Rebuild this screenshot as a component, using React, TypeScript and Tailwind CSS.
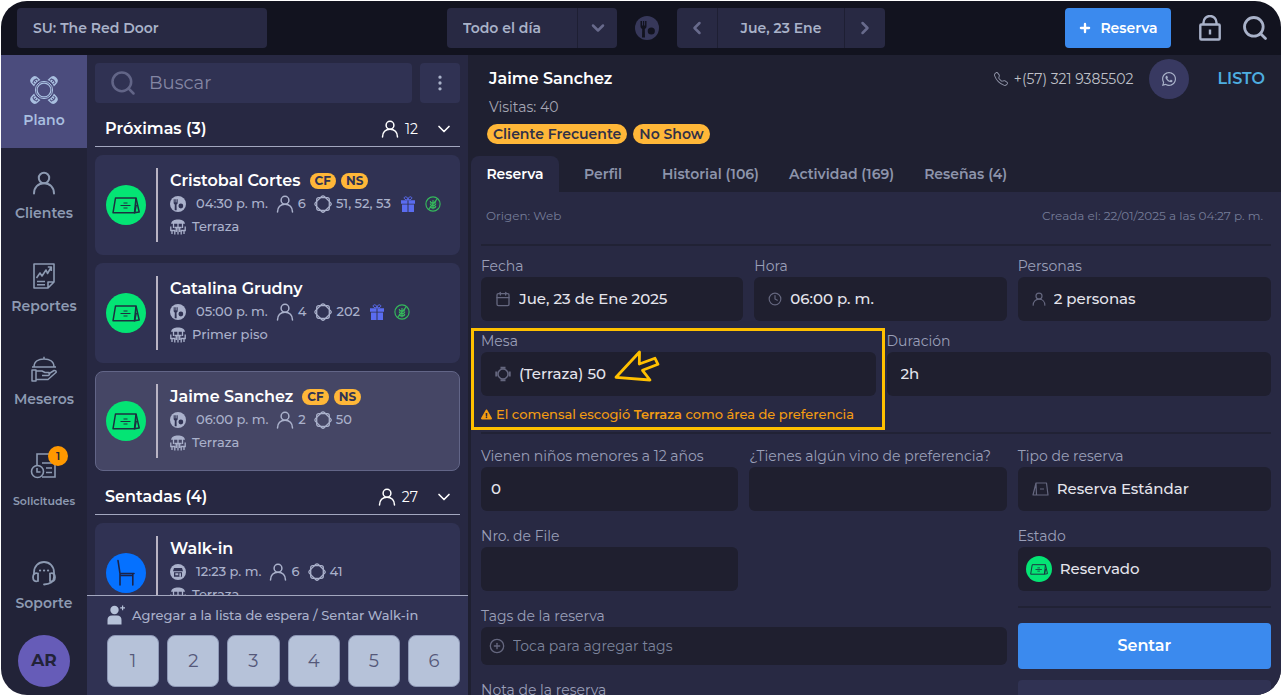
import type { ReactNode } from "react"
import clsx from "clsx"
import { Calendar, ChevronDown, ChevronLeft, ChevronRight, CirclePlus, Clock, EllipsisVertical, Plus, Search } from "lucide-react"
import { BsTelephone } from "react-icons/bs"
import { FaExclamationTriangle, FaWhatsapp } from "react-icons/fa"

type IconProps = { className?: string }

function UserIcon({ className }: IconProps) {
  return (
    <svg viewBox="0 0 24 24" fill="none" stroke="currentColor" strokeWidth="2" strokeLinecap="round" className={className}>
      <circle cx="12" cy="7" r="5.2" />
      <path d="M2 22.5c0-6 4-10.3 10-10.3s10 4.3 10 10.3" />
    </svg>
  )
}

function FloorIcon({ className }: IconProps) {
  return (
    <svg viewBox="0 0 28 28" fill="none" stroke="currentColor" className={className}>
      {[45, 135, 225, 315].map((angle) => (
        <g key={angle} transform={`rotate(${angle} 14 14)`}>
          <path d="M9.500 4.500V1.500Q9.500-3.500 14-3.500T18.500 1.500V4.500Q14 2.500 9.500 4.500z" fill="currentColor" stroke="none" />
          <path d="M11.500 3V.8q2.500-1.500 5 0V3M14 .5v2" stroke="#4b4c7d" strokeWidth="1" />
        </g>
      ))}
      <circle cx="14" cy="14" r="8.600" strokeWidth="1" />
      <circle cx="14" cy="14" r="6.900" strokeWidth="1.200" />
    </svg>
  )
}

function TableIcon({ className }: IconProps) {
  return (
    <svg viewBox="0 0 18 18" fill="none" stroke="currentColor" strokeWidth="1.300" className={className}>
      <rect x="2.700" y="2.700" width="12.600" height="12.600" rx="2" />
      <rect x="2.700" y="2.700" width="12.600" height="12.600" rx="2" transform="rotate(45 9 9)" />
    </svg>
  )
}

function RoundTableIcon({ className }: IconProps) {
  return (
    <svg viewBox="0 0 16 16" fill="none" stroke="currentColor" strokeWidth="1.500" className={className}>
      <circle cx="8" cy="8" r="5" />
      <path d="M5.500 1.800h5M5.500 14.200h5M1.300 5.500v5M14.700 5.500v5" strokeWidth="2" />
    </svg>
  )
}

function PlateIcon({ className, hole = "#303253" }: IconProps & { hole?: string }) {
  return (
    <svg viewBox="0 0 24 24" className={className}>
      <circle cx="12" cy="12" r="12" fill="currentColor" />
      <path d="M5.500 5v5.500q0 2 1.700 2.400l-.2 8.600h3l-.2-8.600q1.700-.4 1.700-2.400V5" fill={hole} />
      <path d="M7.500 4.500v5M9.600 4.500v5" stroke="currentColor" strokeWidth=".9" />
      <circle cx="16.300" cy="15" r="3.600" fill={hole} />
    </svg>
  )
}

function StoreIcon({ className }: IconProps) {
  return (
    <svg viewBox="0 0 24 24" className={className}>
      <circle cx="12" cy="12" r="12" fill="currentColor" />
      <path d="M6 6h12l1.500 5h-15zM6 12.500h12V19H6z" fill="#303253" />
      <path d="M8 14h4.500v2.800H8zM14 14h2.500v5H14z" fill="currentColor" />
    </svg>
  )
}

function TerraceIcon({ className }: IconProps) {
  return (
    <svg viewBox="0 0 16 16" fill="none" stroke="currentColor" strokeWidth="1.300" className={className}>
      <path d="M1 4.800C1.500 1.500 4.500.4 8 .4s6.500 1.100 7 4.400z" fill="currentColor" stroke="none" />
      <path d="M8 4v11.500M3.500 4v5M12.500 4v5M4.500 8.500h7M.8 7.500v4h4v4M15.200 7.500v4h-4v4M2 11.500V15M14 11.500V15M6.300 9v4M9.700 9v4" />
    </svg>
  )
}

function GiftIcon({ className }: IconProps) {
  return (
    <svg viewBox="0 0 14 16" fill="currentColor" className={className}>
      <path d="M0 4.200h6.500v3.600H0zM7.500 4.200H14v3.600H7.500zM1 8.600h5.500V16H1zM7.500 8.600H13V16H7.500z" />
      <path d="M6.800 4C2.500 4 2.500.8 4.500.8S6.800 2.500 6.800 4zM7.200 4c4.300 0 4.300-3.200 2.300-3.200S7.200 2.500 7.200 4z" fill="none" stroke="currentColor" />
    </svg>
  )
}

function GlutenFreeIcon({ className }: IconProps) {
  return (
    <svg viewBox="0 0 18 18" fill="none" stroke="currentColor" strokeWidth="1.300" className={className}>
      <circle cx="9" cy="9" r="8" />
      <path d="M9 4.500V15M9 8Q6 8 6 5.500M9 11Q6 11 6 8.500M9 13.500Q6 13.500 6 11.200M9 8q3 0 3-2.500M9 11q3 0 3-2.500M9 13.500q3 0 3-2.300M13.500 3.500l-9 11" />
    </svg>
  )
}

function SignIcon({ className }: IconProps) {
  return (
    <svg viewBox="0 0 28 17" fill="none" stroke="currentColor" strokeWidth="1.500" strokeLinejoin="round" className={className}>
      <path d="M3.500 1h20.500l-1.500 14.800H1z" />
      <path d="M24 1l3.200 14-4.700.8 1.800-8" />
      <path d="M8.500 8.500h10M11.500 6h4M11.500 11h4" strokeWidth="1.200" />
    </svg>
  )
}

function SmallSignIcon({ className }: IconProps) {
  return (
    <svg viewBox="0 0 17 14" fill="none" stroke="currentColor" strokeWidth="1.200" strokeLinejoin="round" className={className}>
      <path d="M4 1h10.500l1.500 12H4.500L4 1 1 13h3.500M8 7h4" />
    </svg>
  )
}

function ChairIcon({ className }: IconProps) {
  return (
    <svg viewBox="0 0 20 28" fill="none" stroke="currentColor" strokeWidth="1.600" strokeLinecap="round" className={className}>
      <path d="M2 1.500L4 14.500h14M4 15v11M16.800 15v11M4.500 16.500h12" />
    </svg>
  )
}

function ReportIcon({ className }: IconProps) {
  return (
    <svg viewBox="0 0 24 28" fill="none" stroke="currentColor" strokeWidth="1.600" strokeLinejoin="round" className={className}>
      <path d="M2 2h20v18l-6 6H2zM22 20h-6v6M5 19.500h8M5 22.700h8M4.500 16l3.500-5 2 3 4-6 1.500 3.500L19 5.500M19.300 9V5h-3.500" />
    </svg>
  )
}

function WaiterIcon({ className }: IconProps) {
  return (
    <svg viewBox="0 0 28 28" fill="none" stroke="currentColor" strokeWidth="1.500" strokeLinejoin="round" className={className}>
      <path d="M4 12C4 6.500 8.500 4 14 4s10 2.500 10 8zM14 4V1.800M2 12h24" />
      <path d="M2 15h4v11H2zM6 16h6l3 1.500h4q1.500 2-.8 3H12M18.500 19l5.500-3.500q2.500-.2 2.200 1.800L18 24.500H6" />
    </svg>
  )
}

function RequestIcon({ className }: IconProps) {
  return (
    <svg viewBox="0 0 28 28" fill="none" stroke="currentColor" strokeWidth="1.600" className={className}>
      <path d="M7 13V2h18v23H12M12 11h10M16 16h6M16 20.500h6" />
      <circle cx="7.500" cy="19.500" r="6" />
      <path d="M7 16v4h3.500" />
    </svg>
  )
}

function SupportIcon({ className }: IconProps) {
  return (
    <svg viewBox="0 0 28 28" fill="none" stroke="currentColor" strokeWidth="1.800" strokeLinecap="round" className={className}>
      <path d="M4 15v-1.500C4 7 8.500 3 14 3s10 4 10 10.500V18c0 5-3.500 7-10 7.500" />
      <path d="M8 14.500v7.500c-3 1-5-.5-5-3.700s2-4.800 5-3.800zM20 14.500v7.500c3 1 5-.5 5-3.700s-2-4.800-5-3.800z" />
      <path d="M10 11.500h.1M14 11.500h.1M18 11.500h.1" strokeWidth="2.200" />
    </svg>
  )
}

function LockIcon({ className }: IconProps) {
  return (
    <svg viewBox="0 0 22 26" fill="none" stroke="currentColor" strokeWidth="2.400" strokeLinejoin="round" className={className}>
      <rect x="1.300" y="9.500" width="19.400" height="15" rx="1" />
      <path d="M4.500 9.500V7.500a6.500 6.500 0 0 1 13 0v2M11 14.500v5" />
    </svg>
  )
}

function AddPersonIcon({ className }: IconProps) {
  return (
    <svg viewBox="0 0 18 20" fill="currentColor" className={className}>
      <circle cx="7.500" cy="5" r="4.200" />
      <path d="M.5 19.500V15q0-4.500 4.500-4.500h5q4.500 0 4.500 4.500v4.500zM15 .5h1.200v1.800H18v1.200h-1.800v1.800H15V3.500h-1.800V2.300H15z" />
    </svg>
  )
}

const navItems = [
  { label: "Plano", Icon: FloorIcon, active: true },
  { label: "Clientes", Icon: UserIcon },
  { label: "Reportes", Icon: ReportIcon },
  { label: "Meseros", Icon: WaiterIcon },
  { label: "Solicitudes", Icon: RequestIcon, badge: 1 },
  { label: "Soporte", Icon: SupportIcon },
]

type Booking = {
  name: string
  time: string
  people: number
  tables: string
  area: string
  tags?: string[]
  extras?: boolean
  selected?: boolean
  walkIn?: boolean
}

const upcoming: Booking[] = [
  { name: "Cristobal Cortes", time: "04:30 p. m.", people: 6, tables: "51, 52, 53", area: "Terraza", tags: ["CF", "NS"], extras: true },
  { name: "Catalina Grudny", time: "05:00 p. m.", people: 4, tables: "202", area: "Primer piso", extras: true },
  { name: "Jaime Sanchez", time: "06:00 p. m.", people: 2, tables: "50", area: "Terraza", tags: ["CF", "NS"], selected: true },
]

const seated: Booking[] = [
  { name: "Walk-in", time: "12:23 p. m.", people: 6, tables: "41", area: "Terraza", walkIn: true },
]

const tabs = ["Reserva", "Perfil", "Historial (106)", "Actividad (169)", "Reseñas (4)"]

function TopBar() {
  return (
    <header className="flex h-[54px] shrink-0 items-center justify-between bg-[#12131f] pr-3 pl-4 text-sm font-semibold text-[#a9b2c9]">
      <button className="h-10 w-[250px] rounded bg-[#282943] px-4 text-left">SU: The Red Door</button>
      <div className="flex items-center gap-[18px]">
        <div className="relative">
          <select aria-label="Turno" className="h-10 w-[170px] appearance-none rounded bg-[#282943] px-4">
            <option>Todo el día</option>
          </select>
          <span className="pointer-events-none absolute inset-y-0 right-0 flex w-10 items-center justify-center border-l border-[#1e1f33]">
            <ChevronDown className="size-5 text-[#686a8c]" strokeWidth={3} />
          </span>
        </div>
        <button aria-label="Servicio">
          <PlateIcon className="size-6 text-[#37385a]" hole="#12131f" />
        </button>
        <div className="flex h-10 overflow-hidden rounded bg-[#282943]">
          <button aria-label="Día anterior" className="flex w-10 items-center justify-center">
            <ChevronLeft className="size-5 text-[#686a8c]" strokeWidth={3} />
          </button>
          <button className="w-32 border-x border-[#1e1f33]">Jue, 23 Ene</button>
          <button aria-label="Día siguiente" className="flex w-10 items-center justify-center">
            <ChevronRight className="size-5 text-[#686a8c]" strokeWidth={3} />
          </button>
        </div>
      </div>
      <div className="flex items-center">
        <button className="flex h-10 w-[106px] items-center justify-center gap-2 rounded bg-[#3b8aee] text-white">
          <Plus className="size-3.5" strokeWidth={4} />
          Reserva
        </button>
        <button aria-label="Bloquear" className="ml-7">
          <LockIcon className="h-[26px] w-[22px]" />
        </button>
        <button aria-label="Buscar" className="ml-5">
          <Search className="size-7" strokeWidth={2.4} />
        </button>
      </div>
    </header>
  )
}

function SideNav() {
  return (
    <nav className="flex w-[86px] shrink-0 flex-col items-center bg-[#222338] text-[#8d9ab2]">
      {navItems.map(({ label, Icon, active, badge }) => (
        <button
          key={label}
          className={clsx(
            "flex w-full shrink-0 flex-col items-center font-semibold",
            badge ? "h-[111px] gap-[11px] pt-[25px] text-[11px]" : "h-[93px] gap-1.5 pt-[21px] text-sm",
            active && "bg-[#4b4c7d] text-[#a9bfe0]"
          )}
        >
          <span className="relative">
            <Icon className={label === "Clientes" ? "my-0.5 size-6" : "size-7"} />
            {badge && (
              <span className="absolute -top-1.5 -right-2.5 flex size-5 items-center justify-center rounded-full bg-[#ff9800] text-[11px] text-[#222338]">
                {badge}
              </span>
            )}
          </span>
          <span className="leading-5">{label}</span>
        </button>
      ))}
      <button className="mt-1 size-[52px] shrink-0 rounded-full bg-[#665cb8] text-[17px] font-bold text-[#222338]">AR</button>
    </nav>
  )
}

function SectionHeader({ title, count }: { title: string; count: number }) {
  return (
    <div className="flex h-11 shrink-0 items-center border-b border-[#a3a7bf] pt-2 pr-1.5 pl-2.5 text-white">
      <h2 className="flex-1 text-base font-semibold">{title}</h2>
      <UserIcon className="size-[18px]" />
      <span className="ml-1.5 text-sm">{count}</span>
      <button aria-label={`Contraer ${title}`} className="ml-4">
        <ChevronDown className="size-5" strokeWidth={2} />
      </button>
    </div>
  )
}

function BookingCard({ booking }: { booking: Booking }) {
  return (
    <article
      className={clsx(
        "flex h-[100px] shrink-0 items-center rounded-lg border pl-2.5",
        booking.selected ? "border-[#626587] bg-[#454665]" : "border-transparent bg-[#303253]"
      )}
    >
      <span
        className={clsx(
          "flex size-10 shrink-0 items-center justify-center rounded-full text-[#1c3040]",
          booking.walkIn ? "bg-[#0571ff]" : "bg-[#04e474]"
        )}
      >
        {booking.walkIn ? <ChairIcon className="h-7 w-5 text-[#1b2348]" /> : <SignIcon className="h-[17px] w-7" />}
      </span>
      <div className="ml-2.5 h-[74px] border-l-2 border-[#b9b4c4] pl-3 text-[13px] font-medium whitespace-nowrap text-[#aab1cb]">
        <div className="flex h-[26px] items-center gap-[5px]">
          <h3 className="mr-1 text-base font-semibold text-white">{booking.name}</h3>
          {booking.tags?.map((tag) => (
            <span key={tag} className="rounded-full bg-[#ffb738] px-[5px] text-xs leading-4 font-bold text-[#303253]">
              {tag}
            </span>
          ))}
        </div>
        <div className="flex h-5 items-center">
          {booking.walkIn ? <StoreIcon className="size-4" /> : <PlateIcon className="size-4" />}
          <span className="ml-2.5">{booking.time}</span>
          <UserIcon className="ml-2 size-[18px]" />
          <span className="ml-1">{booking.people}</span>
          <TableIcon className="ml-2 size-[18px]" />
          <span className="ml-1">{booking.tables}</span>
          {booking.extras && (
            <>
              <GiftIcon className="ml-2.5 h-4 w-3.5 text-[#5a6cf0]" />
              <GlutenFreeIcon className="ml-2.5 size-4 text-[#35b85c]" />
            </>
          )}
        </div>
        <div className="flex h-[26px] items-center gap-1.5">
          <TerraceIcon className="size-4" />
          {booking.area}
        </div>
      </div>
    </article>
  )
}

function BookingList() {
  return (
    <section className="flex w-[381px] shrink-0 flex-col bg-[#272842]">
      <div className="flex min-h-0 flex-1 flex-col gap-2 overflow-hidden px-2 pt-2">
        <div>
          <div className="flex gap-2">
            <label className="flex h-10 min-w-0 flex-1 items-center gap-3 rounded bg-[#303253] px-3.5">
              <Search className="size-7 shrink-0 text-[#626587]" strokeWidth={2.2} />
              <input
                aria-label="Buscar"
                placeholder="Buscar"
                className="min-w-0 flex-1 bg-transparent text-lg outline-none placeholder:text-[#8486a3]"
              />
            </label>
            <button aria-label="Más opciones" className="flex size-10 items-center justify-center rounded bg-[#303253] text-[#a9b2c9]">
              <EllipsisVertical className="size-5" />
            </button>
          </div>
          <SectionHeader title="Próximas (3)" count={12} />
        </div>
        {upcoming.map((booking) => (
          <BookingCard key={booking.name} booking={booking} />
        ))}
        <div className="-mt-2">
          <SectionHeader title="Sentadas (4)" count={27} />
        </div>
        {seated.map((booking) => (
          <BookingCard key={booking.name} booking={booking} />
        ))}
      </div>
      <footer className="shrink-0 border-t border-[#a3a7bf] bg-[#303253] pt-[7px] pr-2 pb-2 pl-5">
        <p className="flex items-center gap-[7px] text-[13px] leading-6 font-medium text-[#aab1cb]">
          <AddPersonIcon className="h-5 w-[18px] text-[#b6c2d9]" />
          Agregar a la lista de espera / Sentar Walk-in
        </p>
        <div className="mt-2 grid grid-cols-6 gap-2">
          {[1, 2, 3, 4, 5, 6].map((n) => (
            <button key={n} className="h-[52px] rounded-lg border border-[#8d97b5] bg-[#b6c2d9] text-lg text-[#555879]">
              {n}
            </button>
          ))}
        </div>
      </footer>
    </section>
  )
}

type FieldProps = {
  id: string
  label: string
  value?: string
  placeholder?: string
  icon?: ReactNode
  select?: boolean
  size?: string
}

function Field({ id, label, value, placeholder, icon, select, size = "h-11 pl-3.5 text-[15px]" }: FieldProps) {
  const control =
    "min-w-0 flex-1 appearance-none self-stretch bg-transparent font-medium text-[#e4e4ec] outline-none placeholder:font-normal placeholder:text-[#7c849c]"
  return (
    <div className="min-w-0">
      <label htmlFor={id} className="mb-px block text-sm leading-5 whitespace-nowrap text-[#9a9fb8]">
        {label}
      </label>
      <div className={clsx("flex items-center gap-2 rounded-md bg-[#1f1f2f] text-[#65677f]", size)}>
        {icon}
        {select ? (
          <select id={id} className={control}>
            <option>{value}</option>
          </select>
        ) : (
          <input id={id} defaultValue={value} placeholder={placeholder} className={control} />
        )}
      </div>
    </div>
  )
}

function Divider() {
  return <hr className="border-t-2 border-[#212235]" />
}

function ReservationForm() {
  return (
    <div className="min-h-0 flex-1 overflow-hidden bg-[#282943] px-2.5">
      <div className="flex h-[52px] items-center justify-between pr-2 pb-1 pl-[5px] text-xs text-[#757c98]">
        <span>Origen: Web</span>
        <span>Creada el: 22/01/2025 a las 04:27 p. m.</span>
      </div>
      <Divider />

      <div className="mt-2.5 grid grid-cols-[262fr_252fr_253fr] gap-[11px]">
        <Field id="fecha" label="Fecha" value="Jue, 23 de Ene 2025" icon={<Calendar className="size-4" />} />
        <Field id="hora" label="Hora" value="06:00 p. m." icon={<Clock className="size-3.5" />} />
        <Field id="personas" label="Personas" value="2 personas" icon={<UserIcon className="size-3.5" />} />
      </div>

      <div className="mt-2.5 mb-2 grid grid-cols-[394fr_384fr] gap-[11px]">
        <div className="relative min-w-0">
          <Field id="mesa" label="Mesa" value="(Terraza) 50" icon={<RoundTableIcon className="size-4" />} />
          <p className="mt-2 flex items-center gap-1 text-[13px] leading-5 font-medium whitespace-nowrap text-[#f39c12]">
            <FaExclamationTriangle className="size-[11px]" />
            <span>
              El comensal escogió <b className="font-semibold">Terraza</b> como área de preferencia
            </span>
          </p>
          <div className="pointer-events-none absolute -top-[3px] -right-[9px] -bottom-1.5 -left-2.5 border-3 border-[#ffc000]" />
          <svg
            viewBox="0 0 46 34"
            fill="none"
            stroke="#ffc000"
            strokeWidth="2.800"
            strokeLinejoin="round"
            className="pointer-events-none absolute top-[18px] left-[133px] h-[34px] w-[46px]"
          >
            <path d="M2 28.300L25.500 3l-.2 12L41 9.300l3 6-15.500 6 7.500 9.700z" />
          </svg>
        </div>
        <Field id="duracion" label="Duración" value="2h" />
      </div>
      <Divider />

      <div className="mt-3 grid grid-cols-[525fr_253fr] gap-[11px]">
        <div className="flex flex-col gap-[15px]">
          <div className="grid grid-cols-2 gap-x-[11px] gap-y-[15px]">
            <Field id="ninos" label="Vienen niños menores a 12 años" value="0" size="h-11 pl-2.5 text-[15px]" />
            <Field id="vino" label="¿Tienes algún vino de preferencia?" size="h-11 pl-2.5 text-[15px]" />
            <Field id="file" label="Nro. de File" size="h-11 pl-2.5 text-[15px]" />
          </div>
          <Field
            id="tags"
            label="Tags de la reserva"
            placeholder="Toca para agregar tags"
            icon={<CirclePlus className="size-4" />}
            size="h-[38px] pl-2 text-sm"
          />
          <Field id="nota" label="Nota de la reserva" />
        </div>
        <div className="flex flex-col gap-[15px]">
          <Field id="tipo" label="Tipo de reserva" value="Reserva Estándar" select icon={<SmallSignIcon className="h-3.5 w-[17px]" />} />
          <Field
            id="estado"
            label="Estado"
            value="Reservado"
            select
            size="h-11 pl-2 text-[15px]"
            icon={
              <span className="flex size-[26px] items-center justify-center rounded-full bg-[#04e474] text-[#1c3040]">
                <SignIcon className="h-[11px] w-[18px]" />
              </span>
            }
          />
          <Divider />
          <div className="flex flex-col gap-[11px]">
            <button className="h-[46px] rounded bg-[#3b8aee] text-base font-semibold text-white">Sentar</button>
            <button aria-label="Más acciones" className="h-[46px] rounded bg-[#303253]" />
          </div>
        </div>
      </div>
    </div>
  )
}

function BookingDetail() {
  return (
    <main className="flex min-w-0 flex-1 flex-col bg-[#1f2031] pl-[3px]">
      <div className="flex items-start justify-between pt-1 pr-4 pl-4">
        <div>
          <h1 className="pl-0.5 text-base leading-10 font-semibold text-white">Jaime Sanchez</h1>
          <p className="pl-0.5 text-sm leading-4 text-[#a5a6b4]">Visitas: 40</p>
          <div className="mt-[9px] flex gap-1.5">
            {["Cliente Frecuente", "No Show"].map((tag) => (
              <span key={tag} className="rounded-full bg-[#ffb738] px-1.5 text-sm leading-5 font-semibold text-[#303048]">
                {tag}
              </span>
            ))}
          </div>
        </div>
        <div className="flex items-center">
          <a href="tel:+573219385502" className="flex items-center gap-1.5 text-sm text-[#bfc0c8]">
            <BsTelephone className="size-3.5 text-[#8d91a5]" />
            +(57) 321 9385502
          </a>
          <button aria-label="WhatsApp" className="ml-4 flex size-10 items-center justify-center rounded-full bg-[#383961] text-[#a9b2c9]">
            <FaWhatsapp className="size-4" />
          </button>
          <button className="ml-7 text-base font-semibold text-[#4eaee0]">LISTO</button>
        </div>
      </div>
      <div role="tablist" className="mt-3 flex">
        {tabs.map((tab, i) => (
          <button
            key={tab}
            role="tab"
            aria-selected={i === 0}
            className={clsx(
              "h-9 min-w-[88px] rounded-t-lg px-[15px] text-sm font-semibold",
              i === 0 ? "bg-[#282943] text-white" : "text-[#8d94ab]"
            )}
          >
            {tab}
          </button>
        ))}
      </div>
      <ReservationForm />
    </main>
  )
}

export default function App() {
  return (
    <div className="h-screen bg-white p-px font-['Montserrat','Inter',sans-serif]">
      <div className="flex h-full flex-col overflow-hidden rounded-[26px]">
        <TopBar />
        <div className="flex min-h-0 flex-1">
          <SideNav />
          <BookingList />
          <BookingDetail />
        </div>
      </div>
    </div>
  )
}
